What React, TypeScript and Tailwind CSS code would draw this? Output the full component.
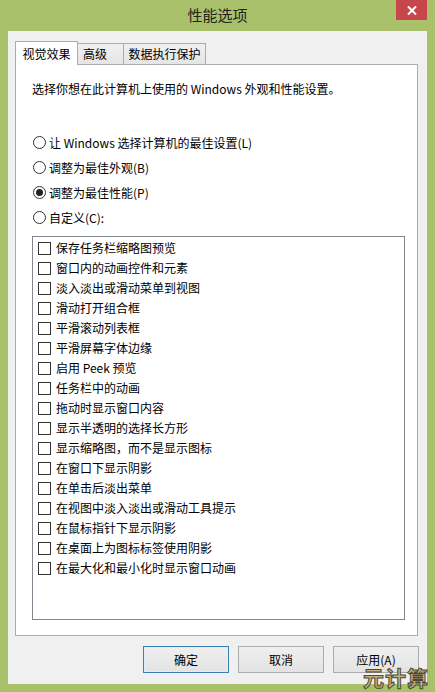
import { useState } from 'react';

const font = "font-['Microsoft_YaHei','Noto_Sans_CJK_SC',sans-serif]";

const radios = [
  '让 Windows 选择计算机的最佳设置(L)',
  '调整为最佳外观(B)',
  '调整为最佳性能(P)',
  '自定义(C):',
];

const options = [
  '保存任务栏缩略图预览',
  '窗口内的动画控件和元素',
  '淡入淡出或滑动菜单到视图',
  '滑动打开组合框',
  '平滑滚动列表框',
  '平滑屏幕字体边缘',
  '启用 Peek 预览',
  '任务栏中的动画',
  '拖动时显示窗口内容',
  '显示半透明的选择长方形',
  '显示缩略图，而不是显示图标',
  '在窗口下显示阴影',
  '在单击后淡出菜单',
  '在视图中淡入淡出或滑动工具提示',
  '在鼠标指针下显示阴影',
  '在桌面上为图标标签使用阴影',
  '在最大化和最小化时显示窗口动画',
];

const Radio = ({ label, checked, onClick }: { label: string; checked: boolean; onClick: () => void }) => (
  <div className="flex items-center h-[25px] cursor-default" onClick={onClick}>
    <span className="w-[13px] h-[13px] rounded-full border border-[#333] bg-white flex items-center justify-center">
      {checked && <span className="w-[7px] h-[7px] rounded-full bg-[#222]" />}
    </span>
    <span className="ml-[3px]">{label}</span>
  </div>
);

const Check = ({ label }: { label: string }) => {
  const [on, setOn] = useState(false);
  return (
    <div className="flex items-center h-[20px] cursor-default" onClick={() => setOn(!on)}>
      <span className="w-[13px] h-[13px] border border-[#333] bg-white flex items-center justify-center text-[10px] leading-none">
        {on ? '✓' : ''}
      </span>
      <span className="ml-[5px]">{label}</span>
    </div>
  );
};

const Button = ({ label, primary }: { label: string; primary?: boolean }) => (
  <button
    className={`w-[86px] h-[27px] text-[12px] text-black bg-gradient-to-b from-[#efefef] to-[#e3e3e3] border ${
      primary ? 'border-[#3c7fb1] shadow-[inset_0_0_0_1px_#e0ecf7]' : 'border-[#acacac]'
    }`}
  >
    {label}
  </button>
);

export default function App() {
  const [mode, setMode] = useState(2);

  return (
    <div className={`w-[435px] h-[692px] bg-[#a9c16b] flex flex-col ${font} text-[12px] text-black`}>
      {/* title bar */}
      <div className="relative h-[31px] flex items-center justify-center">
        <span className="text-[15px] text-[#222] -mt-[1px]">性能选项</span>
        <div className="absolute top-0 right-[8px] w-[31px] h-[20px] bg-[#c7464b] flex items-center justify-center">
          <svg width="10" height="9" viewBox="0 0 10 9">
            <path d="M1 0.5 L9 8.5 M9 0.5 L1 8.5" stroke="white" strokeWidth="2" />
          </svg>
        </div>
      </div>

      {/* client area */}
      <div className="mx-[8px] h-[653px] bg-[#f0f0f0] px-[7px] pt-[10px] flex flex-col">
        {/* tabs */}
        <div className="flex items-end h-[23px]">
          <div className="h-[24px] w-[63px] bg-white border border-b-0 border-[#acacac] flex items-center justify-center relative z-10 -mb-[1px]">
            视觉效果
          </div>
          <div className="h-[21px] w-[46px] bg-gradient-to-b from-[#f0f0f0] to-[#e5e5e5] border border-l-0 border-b-0 border-[#acacac] flex items-center pl-[5px]">
            高级
          </div>
          <div className="h-[21px] w-[82px] bg-gradient-to-b from-[#f0f0f0] to-[#e5e5e5] border border-l-0 border-b-0 border-[#acacac] flex items-center justify-center">
            数据执行保护
          </div>
        </div>

        {/* panel */}
        <div className="w-[403px] h-[572px] bg-white border border-[#acacac] pl-[16px] pt-[15px]">
          <div className="h-[18px] leading-[18px]">选择你想在此计算机上使用的 Windows 外观和性能设置。</div>
          <div className="mt-[32px] pl-[1px]">
            {radios.map((r, i) => (
              <Radio key={r} label={r} checked={mode === i} onClick={() => setMode(i)} />
            ))}
          </div>
          <div className="mt-[6px] w-[373px] h-[384px] border border-[#828790] pl-[5px] pt-[1px]">
            {options.map((o) => (
              <Check key={o} label={o} />
            ))}
          </div>
        </div>

        {/* buttons */}
        <div className="flex justify-end gap-[9px] mt-[10px] pr-[1px] relative">
          <Button label="确定" primary />
          <Button label="取消" />
          <Button label="应用(A)" />
          <span className="absolute right-[-9px] top-[21px] text-[21px] font-bold leading-none text-[#c8b27c] [-webkit-text-stroke:1px_#4a4a3a] tracking-[1px]">
            元计算
          </span>
        </div>
      </div>
    </div>
  );
}
